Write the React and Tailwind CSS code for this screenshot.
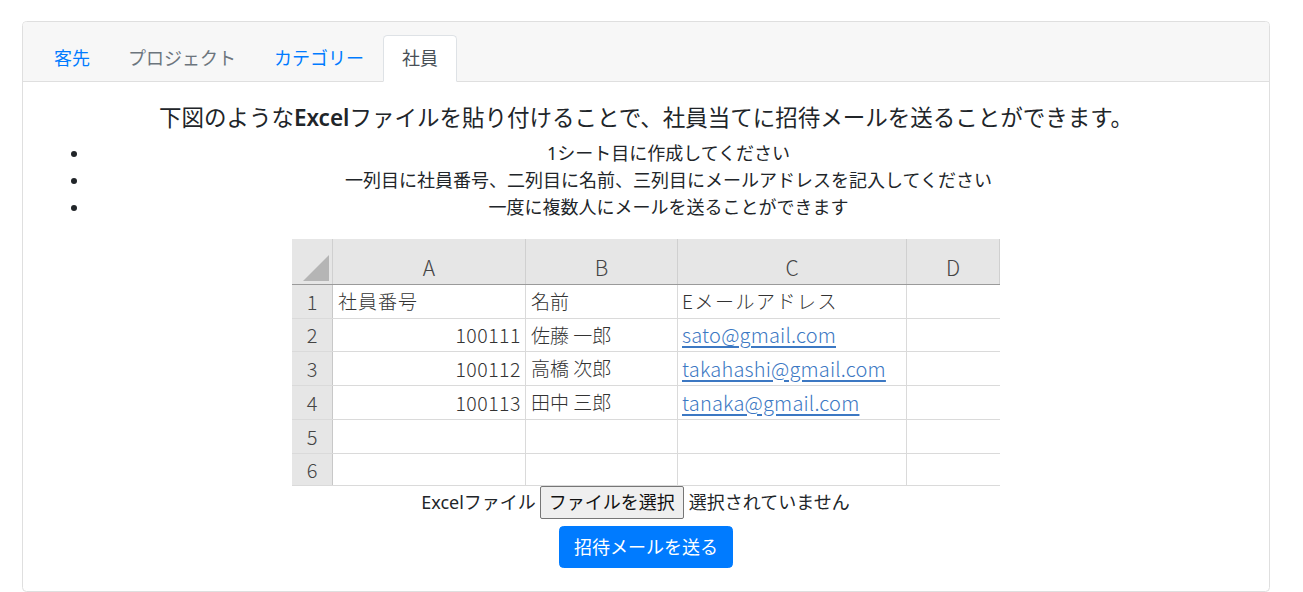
import React from "react";

const FONT = { fontFamily: '"Noto Sans", "Noto Sans CJK JP", sans-serif' };
const XL = { fontFamily: '"Noto Sans CJK JP", sans-serif' };

const cols = [41, 193, 152, 229, 93];
const rowHeights = [34, 33, 34, 34, 34, 32];

const rows = [
  ["社員番号", "", "名前", "Eメールアドレス"],
  ["100111", "佐藤 一郎", "sato@gmail.com"],
  ["100112", "高橋 次郎", "takahashi@gmail.com"],
  ["100113", "田中 三郎", "tanaka@gmail.com"],
  null,
  null,
];

function Sheet() {
  return (
    <div className="flex flex-col w-[708px] h-[247px] overflow-hidden bg-white text-[#333]" style={XL}>
      {/* column header */}
      <div className="flex h-[46px] bg-[#e6e6e6] border-b border-[#9a9a9a]">
        <div className="w-[41px] h-full border-r border-[#d0d0d0] flex items-end justify-end pr-[3px] pb-[3px]">
          <svg width="26" height="26" viewBox="0 0 26 26">
            <polygon points="26,0 26,26 0,26" fill="#b5b5b5" />
          </svg>
        </div>
        {["A", "B", "C", "D"].map((l, i) => (
          <div
            key={l}
            className="h-full flex items-center justify-center text-[21px] font-light text-[#444] border-r border-[#d0d0d0] pt-[12px]"
            style={{ width: cols[i + 1] }}
          >
            {l}
          </div>
        ))}
      </div>
      {rowHeights.map((h, r) => {
        const data = rows[r];
        return (
          <div key={r} className="flex border-b border-[#dadada]" style={{ height: h }}>
            <div className="w-[41px] h-full bg-[#e6e6e6] border-r border-[#c8c8c8] flex items-center justify-center text-[20px] font-light text-[#444]">
              {r + 1}
            </div>
            <div className="w-[193px] h-full border-r border-[#dadada] flex items-center text-[19px] font-light">
              {r === 0 ? (
                <span className="pl-[5px] tracking-[1px]">社員番号</span>
              ) : data ? (
                <span className="ml-auto pr-[4px] text-[19.5px] tracking-[0.5px]">{data[0]}</span>
              ) : null}
            </div>
            <div className="w-[152px] h-full border-r border-[#dadada] flex items-center text-[19px] font-light">
              {r === 0 ? (
                <span className="pl-[5px]">名前</span>
              ) : data ? (
                <span className="pl-[5px]">{data[1]}</span>
              ) : null}
            </div>
            <div className="w-[229px] h-full border-r border-[#dadada] flex items-center text-[19px] font-light">
              {r === 0 ? (
                <span className="pl-[4px] tracking-[1.5px]">Eメールアドレス</span>
              ) : data ? (
                <span className="pl-[4px] text-[20px] text-[#3c78c3] underline underline-offset-[3px] tracking-[0.2px]">{data[2]}</span>
              ) : null}
            </div>
            <div className="w-[93px] h-full" />
          </div>
        );
      })}
    </div>
  );
}

export default function App() {
  const tabs = [
    { label: "客先", cls: "text-[#007bff]" },
    { label: "プロジェクト", cls: "text-[#6c757d]" },
    { label: "カテゴリー", cls: "text-[#007bff]" },
  ];
  return (
    <div className="bg-white min-h-[592px] pt-[21px] pl-[22px] text-[#212529]" style={FONT}>
      <div className="w-[1248px] h-[571px] border border-[#dfdfdf] rounded-[4.5px] flex flex-col overflow-hidden">
        {/* header */}
        <div className="bg-[#f7f7f7] border-b border-[#dfdfdf] h-[60px] pt-[13px] pl-[12px] flex items-end">
          <div className="flex items-end -mb-px">
            {tabs.map((t) => (
              <div
                key={t.label}
                className={`px-[18px] py-[9px] text-[18px] leading-[27px] border border-transparent ${t.cls}`}
              >
                {t.label}
              </div>
            ))}
            <div className="px-[18px] py-[9px] text-[18px] leading-[27px] border border-[#dee2e6] border-b-white bg-white rounded-t-[4.5px] text-[#495057]">
              社員
            </div>
          </div>
        </div>
        {/* body */}
        <div className="flex-1 px-[22px] pt-[22px] flex flex-col items-center">
          <h5 className="text-[22.5px] leading-[27px] font-normal text-center mb-[9px]">
            下図のような<span className="font-semibold">Excel</span>ファイルを貼り付けることで、社員当てに招待メールを送ることができます。
          </h5>
          <ul className="w-full list-disc pl-[45px] mb-[18px] text-[18px] leading-[27px] text-center">
            <li>1シート目に作成してください</li>
            <li>一列目に社員番号、二列目に名前、三列目にメールアドレスを記入してください</li>
            <li>一度に複数人にメールを送ることができます</li>
          </ul>
          <Sheet />
          <div className="flex items-center h-[33px] pr-[21px] text-[18px] leading-[27px]">
            <span>Excelファイル</span>
            <span className="ml-[4px] h-[33px] px-[8px] flex items-center bg-[#efefef] border border-[#767676] rounded-[2px] text-[#111]">
              ファイルを選択
            </span>
            <span className="ml-[5px]">選択されていません</span>
          </div>
          <button className="mt-[7px] h-[42px] px-[14px] bg-[#007bff] text-white text-[18px] leading-[27px] rounded-[4.5px] border border-[#007bff]">
            招待メールを送る
          </button>
        </div>
      </div>
    </div>
  );
}
